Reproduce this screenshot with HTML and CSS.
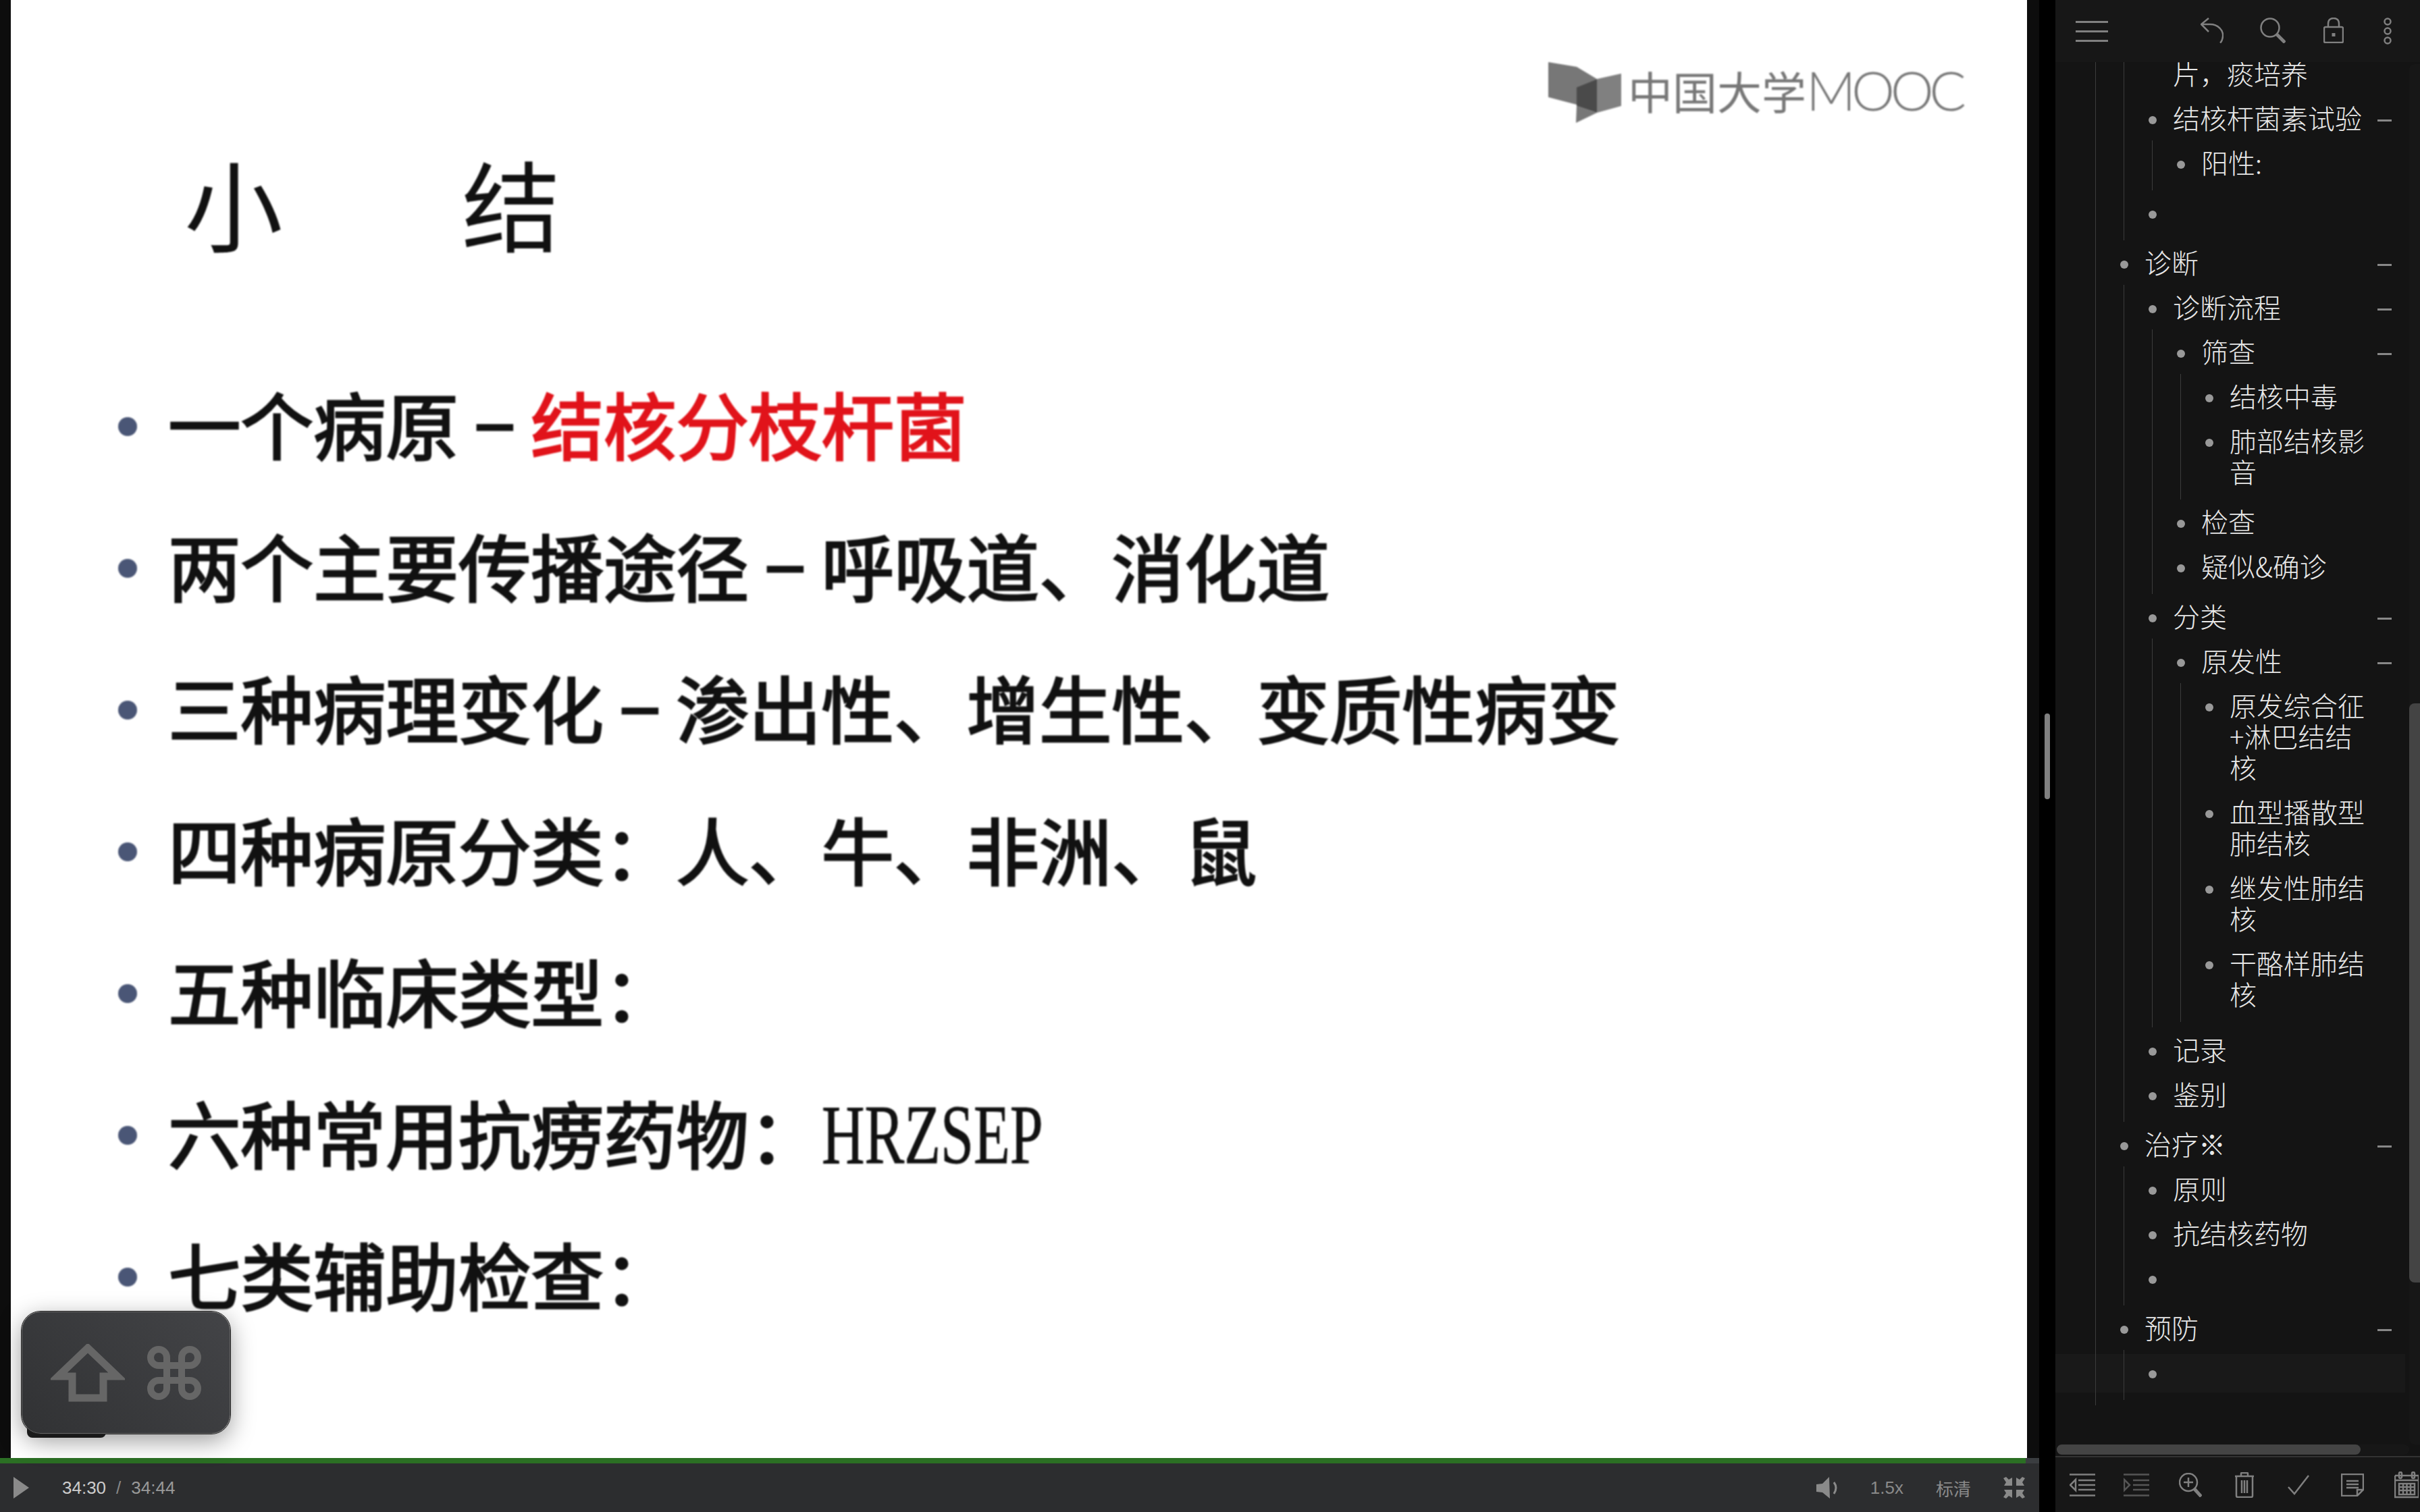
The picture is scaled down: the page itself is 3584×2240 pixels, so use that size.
FILE: index.html
```html
<!DOCTYPE html>
<html lang="zh-CN">
<head>
  <meta charset="UTF-8" />
  <title>小结</title>
  <link rel="stylesheet" href="styles.css">
</head>
<body>

  <div class="player">
    <div class="stage">
      <div class="strip strip-left"></div>
      <div class="slide">
        <!-- Watermark sits over the slide -->
        <div class="logo">
          <svg class="logo-mark" viewBox="0 0 108 90">
            <polygon fill="#777" points="0,0 42,7 72,25 42,37 42,63 0,52"/>
            <polygon fill="#808080" points="72,25 108,17 108,65 72,75"/>
            <polygon fill="#4a4a4a" points="42,37 72,25 72,75 42,65"/>
            <polygon fill="#777" points="42,65 72,75 41,90"/>
          </svg>
          <span class="logo-cn">中国大学</span><span class="logo-en">MOOC</span>
        </div>
        <h1 class="slide-title">小结</h1>
        <ul class="points">
          <li class="point"><span>一个病原<span class="dash">−</span><span class="red">结核分枝杆菌</span></span></li>
          <li class="point"><span>两个主要传播途径<span class="dash">−</span>呼吸道、消化道</span></li>
          <li class="point"><span>三种病理变化<span class="dash">−</span>渗出性、增生性、变质性病变</span></li>
          <li class="point"><span>四种病原分类：人、牛、非洲、鼠</span></li>
          <li class="point"><span>五种临床类型：</span></li>
          <li class="point"><span>六种常用抗痨药物：<span class="drugs">HRZSEP</span></span></li>
          <li class="point"><span>七类辅助检查：</span></li>
        </ul>
      </div>
      <div class="strip"></div>
    </div>

    <div class="progress"><div class="progress-fill"></div></div>

    <div class="controls">
      <svg class="play" viewBox="0 0 23 32"><polygon points="0,0 23,16 0,32"/></svg>
      <span class="time">34:30</span>
      <span class="time-sep">/</span>
      <span class="time-total">34:44</span>
      <div class="controls-right">
        <svg class="volume" viewBox="0 0 32 32">
          <polygon points="0,11 9,10 19,0 20,32 9,23 0,22"/>
          <path d="M26 8 Q32 16 26 25"/>
        </svg>
        <span class="ctl-text">1.5x</span>
        <span class="ctl-text">标清</span>
        <svg class="fullscreen" viewBox="0 0 32 32">
          <path d="M0 2 L4 0 L8 4 L13 1 L13 13 L1 13 L4 8 Z"/>
          <path d="M32 2 L28 0 L24 4 L19 1 L19 13 L31 13 L28 8 Z"/>
          <path d="M0 30 L4 32 L8 28 L13 31 L13 19 L1 19 L4 24 Z"/>
          <path d="M32 30 L28 32 L24 28 L19 31 L19 19 L31 19 L28 24 Z"/>
        </svg>
      </div>
    </div>
  </div>

  <div class="gutter"><div class="handle"></div></div>

  <aside class="sidebar">
    <header class="toolbar">
      <div class="burger"><i></i><i></i><i></i></div>
      <div class="tools">
        <div class="tool">
          <svg width="34" height="38" viewBox="0 0 34 38">
            <path d="M12 1 L1 10 L12 21 M1 10 H14 C26 10 34 19 33 28 C32.5 32 31 36 29 37.5"/>
          </svg>
        </div>
        <div class="tool">
          <svg width="38" height="38" viewBox="0 0 38 38">
            <circle cx="15" cy="15" r="13.5"/>
            <path class="thick" d="M25 25 L37 37"/>
          </svg>
        </div>
        <div class="tool">
          <svg width="30" height="38" viewBox="0 0 30 38">
            <rect x="1" y="14" width="28" height="23" rx="2"/>
            <path d="M7 14 V9 C7 3 11 1 15 1 C19 1 23 3 23 9 V14"/>
            <path class="thick" d="M15 23 V28"/>
          </svg>
        </div>
        <div class="tool tool-dots">
          <svg width="12" height="40" viewBox="0 0 12 40">
            <circle cx="6" cy="6" r="4.5"/>
            <circle cx="6" cy="20" r="4.5"/>
            <circle cx="6" cy="34" r="4.5"/>
          </svg>
        </div>
      </div>
    </header>

    <div class="outline">
      <div class="tree">
        <ul class="list root">
          <li>
            <ul class="list">
              <li><div class="row"><i class="dot dot-off"></i><span class="text">片，痰培养</span></div></li>
              <li>
                <div class="row"><i class="dot"></i><span class="text">结核杆菌素试验</span><i class="minus"></i></div>
                <ul class="list">
                  <li><div class="row"><i class="dot"></i><span class="text">阳性:</span></div></li>
                </ul>
              </li>
              <li><div class="row"><i class="dot"></i><span class="text"></span></div></li>
            </ul>
          </li>
          <li>
            <div class="row"><i class="dot"></i><span class="text">诊断</span><i class="minus"></i></div>
            <ul class="list">
              <li>
                <div class="row"><i class="dot"></i><span class="text">诊断流程</span><i class="minus"></i></div>
                <ul class="list">
                  <li>
                    <div class="row"><i class="dot"></i><span class="text">筛查</span><i class="minus"></i></div>
                    <ul class="list">
                      <li><div class="row"><i class="dot"></i><span class="text narrow">结核中毒</span></div></li>
                      <li><div class="row"><i class="dot"></i><span class="text narrow">肺部结核影音</span></div></li>
                    </ul>
                  </li>
                  <li><div class="row"><i class="dot"></i><span class="text">检查</span></div></li>
                  <li><div class="row"><i class="dot"></i><span class="text">疑似&amp;确诊</span></div></li>
                </ul>
              </li>
              <li>
                <div class="row"><i class="dot"></i><span class="text">分类</span><i class="minus"></i></div>
                <ul class="list">
                  <li>
                    <div class="row"><i class="dot"></i><span class="text">原发性</span><i class="minus"></i></div>
                    <ul class="list">
                      <li><div class="row"><i class="dot"></i><span class="text narrow">原发综合征+淋巴结结核</span></div></li>
                      <li><div class="row"><i class="dot"></i><span class="text narrow">血型播散型肺结核</span></div></li>
                      <li><div class="row"><i class="dot"></i><span class="text narrow">继发性肺结核</span></div></li>
                      <li><div class="row"><i class="dot"></i><span class="text narrow">干酪样肺结核</span></div></li>
                    </ul>
                  </li>
                </ul>
              </li>
              <li><div class="row"><i class="dot"></i><span class="text">记录</span></div></li>
              <li><div class="row"><i class="dot"></i><span class="text">鉴别</span></div></li>
            </ul>
          </li>
          <li>
            <div class="row"><i class="dot"></i><span class="text">治疗※</span><i class="minus"></i></div>
            <ul class="list">
              <li><div class="row"><i class="dot"></i><span class="text">原则</span></div></li>
              <li><div class="row"><i class="dot"></i><span class="text">抗结核药物</span></div></li>
              <li><div class="row"><i class="dot"></i><span class="text"></span></div></li>
            </ul>
          </li>
          <li>
            <div class="row"><i class="dot"></i><span class="text">预防</span><i class="minus"></i></div>
            <ul class="list">
              <li><div class="row current"><i class="dot"></i><span class="text"></span></div></li>
            </ul>
          </li>
        </ul>
      </div>
      <div class="vscroll"><div class="vthumb"></div></div>
    </div>

    <div class="hscroll"><div class="hthumb"></div></div>

    <footer class="bottombar">
      <div class="btn">
        <svg width="38" height="34" viewBox="0 0 38 34">
          <path d="M0 1.5 H38 M13 10 H38 M13 17 H38 M13 24 H38 M0 32.5 H38 M9 9 L1 17 L9 25 Z"/>
        </svg>
      </div>
      <div class="btn btn-dim">
        <svg width="38" height="34" viewBox="0 0 38 34">
          <path d="M0 1.5 H38 M14 10 H38 M14 17 H38 M14 24 H38 M0 32.5 H38 M1 9 L9 17 L1 25 Z"/>
        </svg>
      </div>
      <div class="btn">
        <svg width="34" height="36" viewBox="0 0 34 36">
          <circle cx="14" cy="14" r="13"/>
          <path d="M14 7 V21 M7 14 H21"/>
          <path class="thick" d="M23 24 L33 35"/>
        </svg>
      </div>
      <div class="btn">
        <svg width="28" height="38" viewBox="0 0 28 38">
          <path d="M0 6 H28 M9 6 V2 Q9 1 10 1 H18 Q19 1 19 2 V6 M2 6 V35 Q2 37 4 37 H24 Q26 37 26 35 V6 M10 12 V31 M14 12 V31 M18 12 V31"/>
        </svg>
      </div>
      <div class="btn">
        <svg width="32" height="30" viewBox="0 0 32 30">
          <path d="M1 18 L10 28 L31 1"/>
        </svg>
      </div>
      <div class="btn">
        <svg width="34" height="34" viewBox="0 0 34 34">
          <path d="M1 1 H33 V24 L24 33 H1 Z M33 24 H24 V33 M8 11 H26 M8 16 H26 M8 21 H26"/>
        </svg>
      </div>
      <div class="btn">
        <svg width="36" height="40" viewBox="0 0 36 40">
          <path d="M1 6 H36 M1 6 V38 H36 V6 M1 13 H36"/>
          <rect x="7" y="1" width="4" height="9" rx="2"/>
          <rect x="26" y="1" width="4" height="9" rx="2"/>
          <path d="M7 18 H30 V34 H7 Z M7 23 H30 M7 28 H30 M13 18 V34 M18.5 18 V34 M24 18 V34"/>
        </svg>
      </div>
    </footer>
  </aside>

  <!-- Keystroke overlay, on top of the player -->
  <div class="key-tab"></div>
  <div class="key-hud">
    <svg class="key-shift" viewBox="0 0 110 86">
      <path d="M55 6 L99 48 H78 V80 H32 V48 H11 Z"/>
    </svg>
    <svg class="key-cmd" viewBox="0 0 82 82">
      <path d="M30 52 V18 A12 12 0 1 0 18 30 H64 A12 12 0 1 0 52 18 V64 A12 12 0 1 0 64 52 H18 A12 12 0 1 0 30 64 Z"/>
    </svg>
  </div>

</body>
</html>
```

FILE: styles.css
```css
* {
  box-sizing: border-box;
}

html, body {
  margin: 0;
  height: 100%;
}

body {
  display: flex;
  width: 3584px;
  height: 2240px;
  overflow: hidden;
  position: relative;
  background: #000;
  font-family: "Noto Sans CJK SC", "Liberation Sans", sans-serif;
}

/* Player */
.player {
  width: 3020px;
  display: flex;
  flex-direction: column;
}

.stage {
  flex: 1;
  display: flex;
  min-height: 0;
}

.strip {
  width: 18px;
  background: #0d0d0d;
}

.strip-left {
  width: 16px;
}

.slide {
  flex: 1;
  position: relative;
  overflow: hidden;
  padding: 226px 0 0 159px;
  background: #fff;
  color: #111;
}

.logo {
  position: absolute;
  top: 92px;
  left: 2277px;
  display: flex;
  align-items: center;
  height: 90px;
  color: #777;
  filter: blur(1.2px);
}

.logo-mark {
  width: 108px;
  height: 90px;
  margin-right: 10px;
}

.logo-cn {
  font-size: 66px;
  line-height: 66px;
  font-weight: 400;
  margin-bottom: 8px;
}

.logo-en {
  font-family: "Lato", sans-serif;
  font-weight: 300;
  font-size: 81px;
  line-height: 66px;
  margin-bottom: 8px;
  letter-spacing: -6.5px;
}

.slide-title {
  margin: 0 0 149px 98px;
  font-size: 146px;
  line-height: 146px;
  font-weight: 400;
  letter-spacing: 265px;
  filter: blur(1px);
}

.points {
  list-style: none;
  margin: 0;
  padding: 0;
  filter: blur(1.2px);
}

.point {
  display: flex;
  align-items: center;
  height: 210px;
  font-size: 107.5px;
  font-weight: 400;
  -webkit-text-stroke: 3px currentColor;
  white-space: nowrap;
}

.point::before {
  content: "";
  width: 28px;
  height: 28px;
  margin: 12px 46px 0 0;
  border-radius: 50%;
  background: #4a5676;
}

.dash {
  display: inline-block;
  width: 1em;
  text-align: center;
}

.red {
  color: #e1131a;
}

.drugs {
  display: inline-block;
  font-family: "Liberation Serif", serif;
  font-weight: 400;
  font-size: 124px;
  line-height: 1;
  -webkit-text-stroke: 1px currentColor;
  transform: scaleX(0.71);
  transform-origin: left center;
}

.progress {
  height: 8px;
  background: #3a3d40;
}

.progress-fill {
  width: 3000px;
  height: 100%;
  background: #2b6f24;
}

.controls {
  height: 72px;
  display: flex;
  align-items: center;
  padding: 0 21px 0 20px;
  background: #2c2d2f;
  font-family: "Liberation Sans", "Noto Sans CJK SC", sans-serif;
  font-size: 26px;
}

.play {
  width: 23px;
  height: 32px;
  margin-right: 49px;
  fill: #8a8a8a;
}

.time {
  color: #ccc;
}

.time-sep {
  margin: 0 15px;
  color: #888;
}

.time-total {
  color: #999;
}

.controls-right {
  margin-left: auto;
  display: flex;
  align-items: center;
  gap: 48px;
  color: #8a8a8a;
}

.volume {
  width: 32px;
  height: 32px;
  fill: #8a8a8a;
}

.volume path {
  fill: none;
  stroke: #8a8a8a;
  stroke-width: 3;
}

.fullscreen {
  width: 32px;
  height: 32px;
  fill: #8a8a8a;
}

/* Gutter between player and outline */
.gutter {
  width: 24px;
  display: flex;
  align-items: center;
  justify-content: center;
  background: #000;
}

.handle {
  width: 8px;
  height: 127px;
  border-radius: 4px;
  background: #808080;
}

/* Sidebar */
.sidebar {
  width: 540px;
  display: flex;
  flex-direction: column;
  background: #141414;
  overflow: hidden;
}

.sidebar svg {
  fill: none;
  stroke: #808080;
  stroke-width: 2.5;
}

.sidebar svg .thick {
  stroke-width: 5;
}

.toolbar {
  height: 92px;
  flex: none;
  display: flex;
  align-items: center;
  justify-content: space-between;
  padding: 0 13px 0 30px;
  background: #171717;
}

.burger {
  display: flex;
  flex-direction: column;
  gap: 11px;
}

.burger i {
  width: 48px;
  height: 3px;
  background: #808080;
}

.tools {
  display: flex;
}

.tool {
  width: 90px;
  display: flex;
  justify-content: center;
}

.tool-dots {
  width: 70px;
}

.outline {
  height: 2048px;
  flex: none;
  display: flex;
}

.tree {
  flex: 1;
  min-width: 0;
  overflow: hidden;
  isolation: isolate;
  padding-right: 26px;
}

.list {
  list-style: none;
  margin: -3px 0 3px;
  padding: 3px 0 5px 41px;
  border-left: 1px solid #3c3c3c;
  font-size: 40px;
  font-weight: 300;
  line-height: 46px;
  color: #e8e8e8;
}

.root {
  margin: -16px 0 0 59px;
}

/* Text sits a little above the row centre, the dot and minus on it */
.row {
  position: relative;
  display: flex;
  margin-left: -5px;
  padding: 6px 0 14px;
  min-height: 66px;
}

.current::before {
  content: "";
  position: absolute;
  z-index: -1;
  top: 3px;
  bottom: 6px;
  left: -200px;
  right: -20px;
  background: #191919;
}

.dot {
  flex: none;
  width: 12px;
  height: 12px;
  margin: 21px 24px 0 0;
  border-radius: 50%;
  background: #999;
}

.dot-off {
  visibility: hidden;
}

.text {
  min-width: 0;
}

.narrow {
  max-width: 210px;
}

.minus {
  flex: none;
  width: 21px;
  height: 3px;
  margin: 25.5px 0 0 auto;
  background: #888;
}

.vscroll {
  width: 16px;
  flex: none;
  margin-top: 3px;
  border-radius: 8px 0 0 8px;
  background: #171717;
}

.vthumb {
  height: 858px;
  margin-top: 947px;
  border-radius: 8px 0 0 8px;
  background: #444;
}

.hscroll {
  flex: none;
  width: 522px;
  height: 15px;
  margin: 0 0 2px 2px;
  border-radius: 8px;
  background: #171717;
}

.hthumb {
  width: 450px;
  height: 100%;
  border-radius: 8px;
  background: #444;
}

.bottombar {
  flex: 1;
  display: flex;
  align-items: center;
  border-top: 2px solid #333;
  background: #171717;
}

.btn {
  flex: 0 0 80px;
  display: flex;
  justify-content: center;
}

.btn-dim svg {
  stroke: #555;
}

/* Keystroke overlay */
.key-hud {
  position: absolute;
  left: 32px;
  top: 1943px;
  width: 309px;
  height: 181px;
  display: flex;
  align-items: center;
  justify-content: center;
  gap: 32px;
  border-radius: 28px;
  border: 1px solid #666;
  outline: 1px solid #222;
  background: linear-gradient(45deg, #313234, #434447);
  box-shadow: 0 10px 36px rgba(0, 0, 0, 0.4);
}

.key-tab {
  position: absolute;
  left: 40px;
  top: 2100px;
  width: 117px;
  height: 30px;
  border-radius: 8px;
  background: #222;
}

.key-shift {
  width: 110px;
  height: 86px;
  fill: none;
  stroke: #666;
  stroke-width: 11;
}

.key-cmd {
  width: 82px;
  height: 82px;
  fill: none;
  stroke: #666;
  stroke-width: 10;
}
```
